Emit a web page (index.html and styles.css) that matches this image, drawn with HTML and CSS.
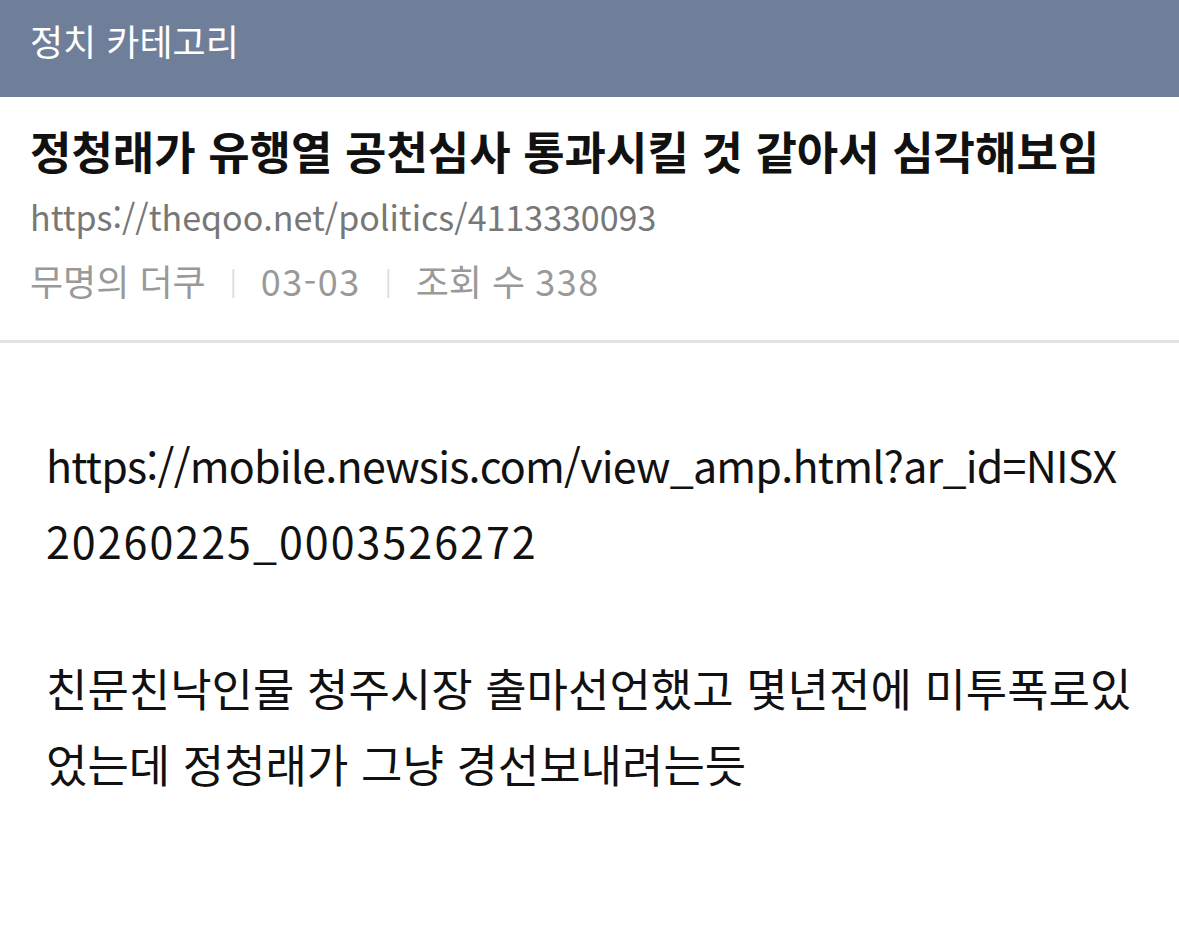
FILE: index.html
```html
<!DOCTYPE html>
<html lang="ko">
<head>
  <meta charset="UTF-8">
  <meta name="viewport" content="width=device-width, initial-scale=1.0">
  <title>정치 카테고리</title>
  <link rel="stylesheet" href="styles.css">
</head>
<body>
  <!-- category bar -->
  <div class="category-bar">정치 카테고리</div>

  <!-- post header -->
  <div class="post-head">
    <h1 class="post-title">정청래가 유행열 공천심사 통과시킬 것 같아서 심각해보임</h1>
    <div class="post-url">https://theqoo.net/politics/4113330093</div>
    <div class="post-meta">
      <span>무명의 더쿠</span>
      <span class="sep">|</span>
      <span class="num">03-03</span>
      <span class="sep">|</span>
      <span>조회 수 <span class="num">338</span></span>
    </div>
  </div>

  <!-- post body -->
  <div class="post-body">
    <p class="link">https://mobile.newsis.com/view_amp.html?ar_id=NISX<span class="digits">20260225_0003526272</span></p>
    <p>친문친낙인물 청주시장 출마선언했고 몇년전에 미투폭로있었는데 정청래가 그냥 경선보내려는듯</p>
  </div>
</body>
</html>
```

FILE: styles.css
```css
body {
  margin: 0;
  background-color: #fff;
  font-family: "Noto Sans CJK KR", "Noto Sans", sans-serif;
  color: #111;
}
.category-bar {
  height: 97px;
  box-sizing: border-box;
  padding: 14px 30px 0;
  background-color: #6f7f9a;
  color: #fff;
  font-size: 36px;
  line-height: 52px;
}
.post-head {
  padding: 22px 30px 29px;
  border-bottom: 3px solid #e3e3e3;
}
.post-title {
  margin: 0;
  font-size: 45px;
  font-weight: bold;
  line-height: 64px;
  color: #111;
}
.post-url {
  padding-top: 2px;
  font-size: 34px;
  line-height: 64px;
  color: #777;
}
.post-meta {
  display: flex;
  gap: 24px;
  font-size: 36px;
  line-height: 62px;
  color: #999;
}
.post-meta .num {
  letter-spacing: 1.5px;
}
.post-meta .sep {
  color: #ddd;
  font-size: 26px;
}
.post-body {
  padding: 83px 43px 0 46px;
  font-size: 45px;
  line-height: 76px;
  word-break: break-all;
}
.post-body p {
  margin: 0 0 72px;
}
.post-body .link {
  font-size: 43px;
  letter-spacing: -0.8px;
}
.post-body .digits {
  letter-spacing: 2px;
}
```
